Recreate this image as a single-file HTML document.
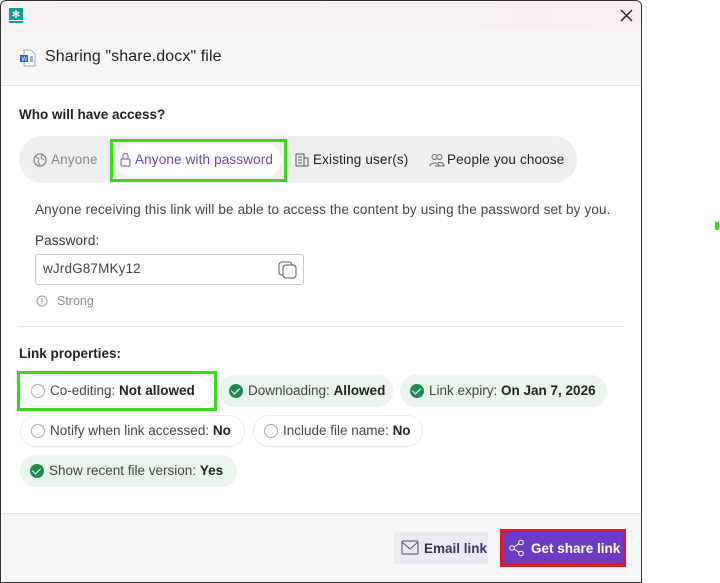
<!DOCTYPE html>
<html><head><meta charset="utf-8"><style>
*{box-sizing:border-box;margin:0;padding:0}
body{width:720px;height:583px;background:#fff;font-family:"Liberation Sans",sans-serif;position:relative;overflow:hidden;color:#222}
.win{position:absolute;left:0;top:0;width:642px;height:583px;border:1px solid #333;border-radius:6px 6px 0 0;background:#fff;overflow:hidden}
.a{position:absolute}
.tb{left:-1px;top:-1px;width:641px;height:31px;background:linear-gradient(90deg,#f6f1f3,#f9eef2)}
.hd{left:-1px;top:30px;width:641px;height:55px;background:#f8f7f8;border-bottom:1px solid #e2e2e2}
.ft{left:-1px;top:512px;width:641px;height:71px;background:#f7f6f7;border-top:1px solid #e2e2e2}
.t13{font-size:13.5px;letter-spacing:0.15px}
.pill{position:absolute;height:32px;border-radius:16px;font-size:13.5px;line-height:32px;padding-left:29px;color:#444;white-space:nowrap}
.pill b{color:#222}
.g{background:#e8f4ec}
.w{background:#fff;border:1px solid #ececec;line-height:30px}
.rad{position:absolute;left:10px;top:9px;width:14px;height:14px;border-radius:50%;border:1px solid #aaa;background:#fff}
.w .rad{top:8px}
.chk{position:absolute;left:10px;top:9px;width:14px;height:14px;border-radius:50%;background:#1f8a4c}
.chk:after{content:"";position:absolute;left:4px;top:2px;width:4px;height:7px;border:solid #fff;border-width:0 1.6px 1.6px 0;transform:rotate(45deg)}
</style></head><body>
<div class="win">
<div class="a tb"></div>
<svg class="a" style="left:8px;top:7px" width="14" height="15" viewBox="0 0 14 15"><rect x="0" y="0" width="14" height="12" fill="#1a9a8a"/><rect x="0" y="13" width="14" height="2" fill="#1a9a8a"/><path d="M7 2v8M3.5 4l7 4M10.5 4l-7 4" stroke="#fff" stroke-width="1.4"/></svg>
<svg class="a" style="left:619px;top:8px" width="13" height="13" viewBox="0 0 13 13"><path d="M1 1l11 11M12 1L1 12" stroke="#222" stroke-width="1.4"/></svg>
<div class="a hd"></div>
<svg class="a" style="left:18px;top:48px" width="18" height="18" viewBox="0 0 18 18"><path d="M5 1h7l4 4v12H5z" fill="#fff" stroke="#aaa"/><rect x="1" y="6" width="8" height="7" fill="#2b5cb8"/><text x="2.5" y="12" font-size="6" fill="#fff" font-family="Liberation Sans">W</text><path d="M11 8h3M11 10h3M11 12h3" stroke="#2b5cb8"/></svg>
<div class="a" style="left:44px;top:47px;font-size:16px;color:#222;letter-spacing:0.1px">Sharing "share.docx" file</div>
<div class="a" style="left:18px;top:106px;font-size:13.5px;font-weight:bold">Who will have access?</div>
<div class="a" style="left:18px;top:135px;width:558px;height:47px;background:#efefef;border-radius:24px"></div>
<div class="a" style="left:113px;top:143px;width:168px;height:32px;background:#fff;border-radius:16px"></div>
<div class="a" style="left:109px;top:138px;width:177px;height:43px;border:3px solid #33dd11"></div>
<svg class="a" style="left:32px;top:152px" width="14" height="14" viewBox="0 0 14 14"><circle cx="7" cy="7" r="6" fill="none" stroke="#888" stroke-width="1.3"/><path d="M3 4l3 2-1 3 2 3M9 2l-1 3 3 2" fill="none" stroke="#888"/></svg>
<div class="a t13" style="left:50px;top:151px;color:#888">Anyone</div>
<svg class="a" style="left:119px;top:151px" width="11" height="15" viewBox="0 0 11 15"><path d="M3 7V4a2.5 2.5 0 0 1 5 0v3" fill="none" stroke="#8a6cc8" stroke-width="1.2"/><rect x="1" y="7" width="9" height="7" rx="1" fill="none" stroke="#8a6cc8" stroke-width="1.2"/></svg>
<div class="a t13" style="left:134px;top:151px;color:#6a3fb5">Anyone with password</div>
<svg class="a" style="left:294px;top:152px" width="14" height="14" viewBox="0 0 14 14"><rect x="1" y="1" width="8" height="12" fill="none" stroke="#555"/><rect x="9" y="5" width="4" height="8" fill="none" stroke="#555"/><path d="M3 4h4M3 7h4M3 10h4" stroke="#555"/></svg>
<div class="a t13" style="left:312px;top:151px;color:#222">Existing user(s)</div>
<svg class="a" style="left:428px;top:152px" width="16" height="14" viewBox="0 0 16 14"><circle cx="5.5" cy="4" r="2.5" fill="none" stroke="#666"/><circle cx="10.5" cy="4" r="2.5" fill="none" stroke="#666"/><path d="M1 13c0-4 9-4 9 0M6 13h9c0-4-5-4-6-3" fill="none" stroke="#666"/></svg>
<div class="a t13" style="left:446px;top:151px;color:#222">People you choose</div>
<div class="a t13" style="left:34px;top:201px;color:#444">Anyone receiving this link will be able to access the content by using the password set by you.</div>
<div class="a t13" style="left:34px;top:232px;color:#333">Password:</div>
<div class="a" style="left:34px;top:253px;width:269px;height:31px;border:1px solid #c8c8c8;border-radius:3px"></div>
<div class="a t13" style="left:42px;top:260px;color:#444">wJrdG87MKy12</div>
<svg class="a" style="left:277px;top:260px" width="19" height="18" viewBox="0 0 19 18"><rect x="1" y="1" width="13" height="13" rx="3" fill="none" stroke="#555"/><rect x="5" y="4" width="13" height="13" rx="3" fill="#fff" stroke="#555"/></svg>
<svg class="a" style="left:35px;top:294px" width="12" height="12" viewBox="0 0 12 12"><circle cx="6" cy="6" r="5" fill="none" stroke="#999"/><path d="M6 3v4M6 8.5v1" stroke="#999" stroke-width="1.2"/></svg>
<div class="a" style="left:56px;top:293px;font-size:12.5px;color:#888">Strong</div>
<div class="a" style="left:18px;top:325px;width:604px;height:1px;background:#e2e2e2"></div>
<div class="a" style="left:18px;top:345px;font-size:13.5px;font-weight:bold">Link properties:</div>
<div class="pill w" style="left:19px;top:374px;width:192px"><span class="rad"></span>Co-editing: <b>Not allowed</b></div>
<div class="a" style="left:16px;top:370px;width:200px;height:40px;border:3px solid #33dd11"></div>
<div class="pill g" style="left:218px;top:374px;width:174px"><span class="chk"></span>Downloading: <b>Allowed</b></div>
<div class="pill g" style="left:399px;top:374px;width:207px"><span class="chk"></span>Link expiry: <b>On Jan 7, 2026</b></div>
<div class="pill w" style="left:19px;top:414px;width:225px"><span class="rad"></span>Notify when link accessed: <b>No</b></div>
<div class="pill w" style="left:252px;top:414px;width:170px"><span class="rad"></span>Include file name: <b>No</b></div>
<div class="pill g" style="left:19px;top:454px;width:217px"><span class="chk"></span>Show recent file version: <b>Yes</b></div>
<div class="a ft"></div>
<div class="a" style="left:393px;top:531px;width:94px;height:32px;background:#ece8f4;border-radius:3px"></div>
<svg class="a" style="left:400px;top:539px" width="18" height="15" viewBox="0 0 18 15"><rect x="1" y="1" width="16" height="13" rx="1" fill="none" stroke="#555"/><path d="M1 2l8 7 8-7" fill="none" stroke="#555"/></svg>
<div class="a" style="left:423px;top:540px;font-size:13.5px;font-weight:bold;color:#3b3560">Email link</div>
<div class="a" style="left:499px;top:528px;width:126px;height:38px;border:3px solid #dd1a22;background:#6e3cc4"></div>
<svg class="a" style="left:507px;top:538px" width="18" height="18" viewBox="0 0 18 18"><circle cx="13" cy="3.5" r="2.3" fill="none" stroke="#fff"/><circle cx="4" cy="9" r="2.3" fill="none" stroke="#fff"/><circle cx="13" cy="14.5" r="2.3" fill="none" stroke="#fff"/><path d="M6 8l5-3.3M6 10l5 3.3" stroke="#fff"/></svg>
<div class="a" style="left:530px;top:540px;font-size:13.5px;font-weight:bold;color:#fff">Get share link</div>
</div>
<div class="a" style="left:715px;top:222px;width:4px;height:8px;background:#33dd11"></div>
</body></html>
